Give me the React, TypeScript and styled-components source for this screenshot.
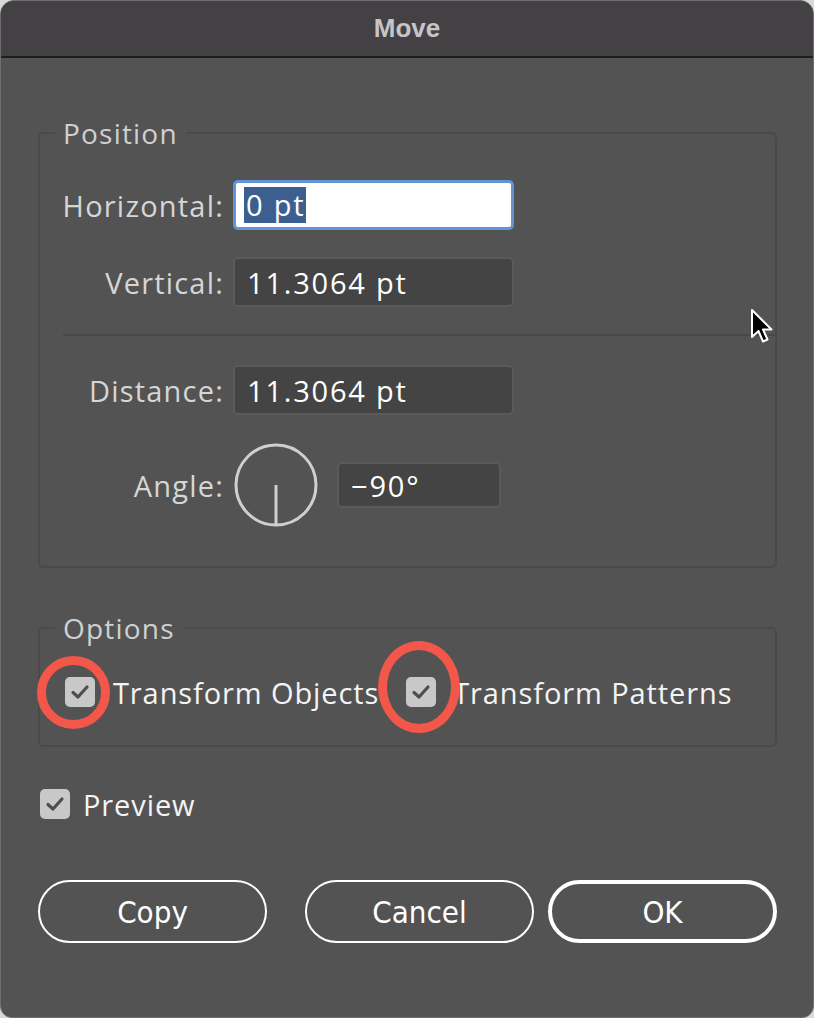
import React from "react";
import styled, { createGlobalStyle } from "styled-components";

const GlobalStyle = createGlobalStyle`
  html, body {
    margin: 0;
    padding: 0;
    background: #d9d9d9;
  }
  body {
    font-family: "Open Sans", "Noto Sans", sans-serif;
  }
`;

const Window = styled.div`
  position: relative;
  width: 814px;
  height: 1018px;
  box-sizing: border-box;
  background: #535353;
  border: 1px solid #6e6e6e;
  border-radius: 14px 14px 12px 12px;
  overflow: hidden;
  display: flex;
  flex-direction: column;
`;

const TitleBar = styled.div`
  height: 55px;
  flex: none;
  background: #434144;
  border-bottom: 2px solid #1e1e1e;
  display: flex;
  align-items: center;
  justify-content: center;
  font-family: "Liberation Sans Narrow", "Liberation Sans", sans-serif;
  font-weight: 700;
  font-size: 26px;
  color: #c6c4c7;
`;

const Body = styled.div`
  padding: 0 36px 0 37px;
  display: flex;
  flex-direction: column;
`;

const Group = styled.fieldset<{ $top: number }>`
  margin: ${(p) => p.$top}px 0 0 0;
  padding: 0;
  min-width: 0;
  border: 2px solid #4a4a4a;
  border-radius: 5px;
`;

const Legend = styled.legend`
  margin-left: 15px;
  padding: 0 8px;
  font-size: 28px;
  line-height: 30px;
  letter-spacing: 1.2px;
  color: #d0d0d0;
`;

const FieldGrid = styled.div<{ $top: number; $gap: number; $bottom: number }>`
  display: grid;
  grid-template-columns: 184px auto;
  column-gap: 9px;
  row-gap: ${(p) => p.$gap}px;
  align-items: center;
  justify-items: start;
  padding: ${(p) => p.$top}px 0 ${(p) => p.$bottom}px 0;
`;

const Label = styled.div`
  justify-self: end;
  font-size: 29px;
  letter-spacing: 1.2px;
  color: #d6d6d6;
  white-space: nowrap;
`;

const Field = styled.div<{ $width: number; $height: number; $focused?: boolean }>`
  width: ${(p) => p.$width}px;
  height: ${(p) => p.$height}px;
  box-sizing: border-box;
  display: flex;
  align-items: center;
  padding-left: ${(p) => (p.$focused ? 8 : 12)}px;
  border-radius: 5px;
  background: ${(p) => (p.$focused ? "#ffffff" : "#444444")};
  border: ${(p) => (p.$focused ? "3px solid #5f95d6" : "2px solid #5a5a5a")};
  font-size: 29px;
  letter-spacing: 1.8px;
  color: #ffffff;
  white-space: nowrap;
`;

const Selection = styled.span`
  background: #3c5f8f;
  color: #ffffff;
  padding: 0 1px 0 2px;
  line-height: 36px;
`;

const Separator = styled.div`
  height: 2px;
  background: #484848;
  margin: 27px 0 0 23px;
`;

const AngleControl = styled.div`
  display: flex;
  align-items: center;
  gap: 19px;
`;

const Dial = styled.svg`
  display: block;
  margin-left: 1px;
`;

const CheckRow = styled.div<{ $top: number; $bottom: number; $left: number }>`
  display: flex;
  align-items: center;
  height: 36px;
  padding: ${(p) => p.$top}px 0 ${(p) => p.$bottom}px ${(p) => p.$left}px;
`;

const CheckItem = styled.div<{ $gap: number; $offset?: number }>`
  display: flex;
  align-items: center;
  gap: ${(p) => p.$gap}px;
  margin-left: ${(p) => p.$offset ?? 0}px;
  font-size: 29px;
  letter-spacing: 0.9px;
  color: #f4f4f4;
  white-space: nowrap;
`;

const Box = styled.div`
  width: 30px;
  height: 30px;
  flex: none;
  border-radius: 5px;
  background: #c8c8c8;
  display: flex;
  align-items: center;
  justify-content: center;
`;

const ButtonRow = styled.div`
  display: flex;
  margin-top: 58px;
`;

const Button = styled.div<{ $primary?: boolean; $after?: number }>`
  width: 229px;
  height: 63px;
  box-sizing: border-box;
  margin-right: ${(p) => p.$after ?? 0}px;
  border: ${(p) => (p.$primary ? 4 : 2)}px solid #ffffff;
  border-radius: 32px;
  display: flex;
  align-items: center;
  justify-content: center;
  font-family: "Liberation Sans Narrow", "DejaVu Sans Condensed", sans-serif;
  font-size: 31px;
  color: #ffffff;
`;

const Ring = styled.div<{ $x: number; $y: number; $w: number; $h: number }>`
  position: absolute;
  left: ${(p) => p.$x}px;
  top: ${(p) => p.$y}px;
  width: ${(p) => p.$w}px;
  height: ${(p) => p.$h}px;
  box-sizing: border-box;
  border: 9px solid #f2574a;
  border-radius: 50%;
  pointer-events: none;
`;

const Cursor = styled.svg`
  position: absolute;
  left: 749px;
  top: 307px;
`;

const Check = () => (
  <svg width="20" height="16" viewBox="0 0 20 16">
    <path
      d="M3 8.5 L8 13 L17 3"
      fill="none"
      stroke="#4e4e4e"
      strokeWidth="3.2"
      strokeLinecap="round"
      strokeLinejoin="round"
    />
  </svg>
);

const CheckOption: React.FC<{ label: string; gap: number; offset?: number }> = ({
  label,
  gap,
  offset,
}) => (
  <CheckItem $gap={gap} $offset={offset}>
    <Box>
      <Check />
    </Box>
    {label}
  </CheckItem>
);

export default function App() {
  return (
    <>
      <GlobalStyle />
      <Window>
        <TitleBar>Move</TitleBar>
        <Body>
          <Group $top={60}>
            <Legend>Position</Legend>
            <FieldGrid $top={32} $gap={27} $bottom={0}>
              <Label>Horizontal:</Label>
              <Field $width={281} $height={50} $focused>
                <Selection>0 pt</Selection>
              </Field>
              <Label>Vertical:</Label>
              <Field $width={281} $height={50}>
                11.3064 pt
              </Field>
            </FieldGrid>
            <Separator />
            <FieldGrid $top={29} $gap={28} $bottom={39}>
              <Label>Distance:</Label>
              <Field $width={281} $height={50}>
                11.3064 pt
              </Field>
              <Label>Angle:</Label>
              <AngleControl>
                <Dial width="84" height="84" viewBox="0 0 84 84">
                  <circle cx="42" cy="42" r="40" fill="none" stroke="#cfcfcf" strokeWidth="3" />
                  <line x1="42" y1="42" x2="42" y2="82" stroke="#cfcfcf" strokeWidth="3" />
                </Dial>
                <Field $width={164} $height={46}>
                  −90°
                </Field>
              </AngleControl>
            </FieldGrid>
          </Group>

          <Group $top={45}>
            <Legend>Options</Legend>
            <CheckRow $top={31} $bottom={35} $left={25}>
              <CheckOption label="Transform Objects" gap={18} />
              <CheckOption label="Transform Patterns" gap={17} offset={27} />
            </CheckRow>
          </Group>

          <CheckRow $top={39} $bottom={0} $left={2}>
            <CheckOption label="Preview" gap={13} />
          </CheckRow>

          <ButtonRow>
            <Button $after={38}>Copy</Button>
            <Button $after={14}>Cancel</Button>
            <Button $primary>OK</Button>
          </ButtonRow>
        </Body>

        <Ring $x={36} $y={655} $w={73} $h={73} />
        <Ring $x={377} $y={640} $w={82} $h={92} />

        <Cursor width="26" height="38" viewBox="0 0 26 38">
          <path
            d="M2 2 L2 29 L8.5 23 L13 33.5 L17.5 31.5 L13 21.5 L21.5 21.5 Z"
            fill="#000000"
            stroke="#ffffff"
            strokeWidth="2"
            strokeLinejoin="round"
          />
        </Cursor>
      </Window>
    </>
  );
}
